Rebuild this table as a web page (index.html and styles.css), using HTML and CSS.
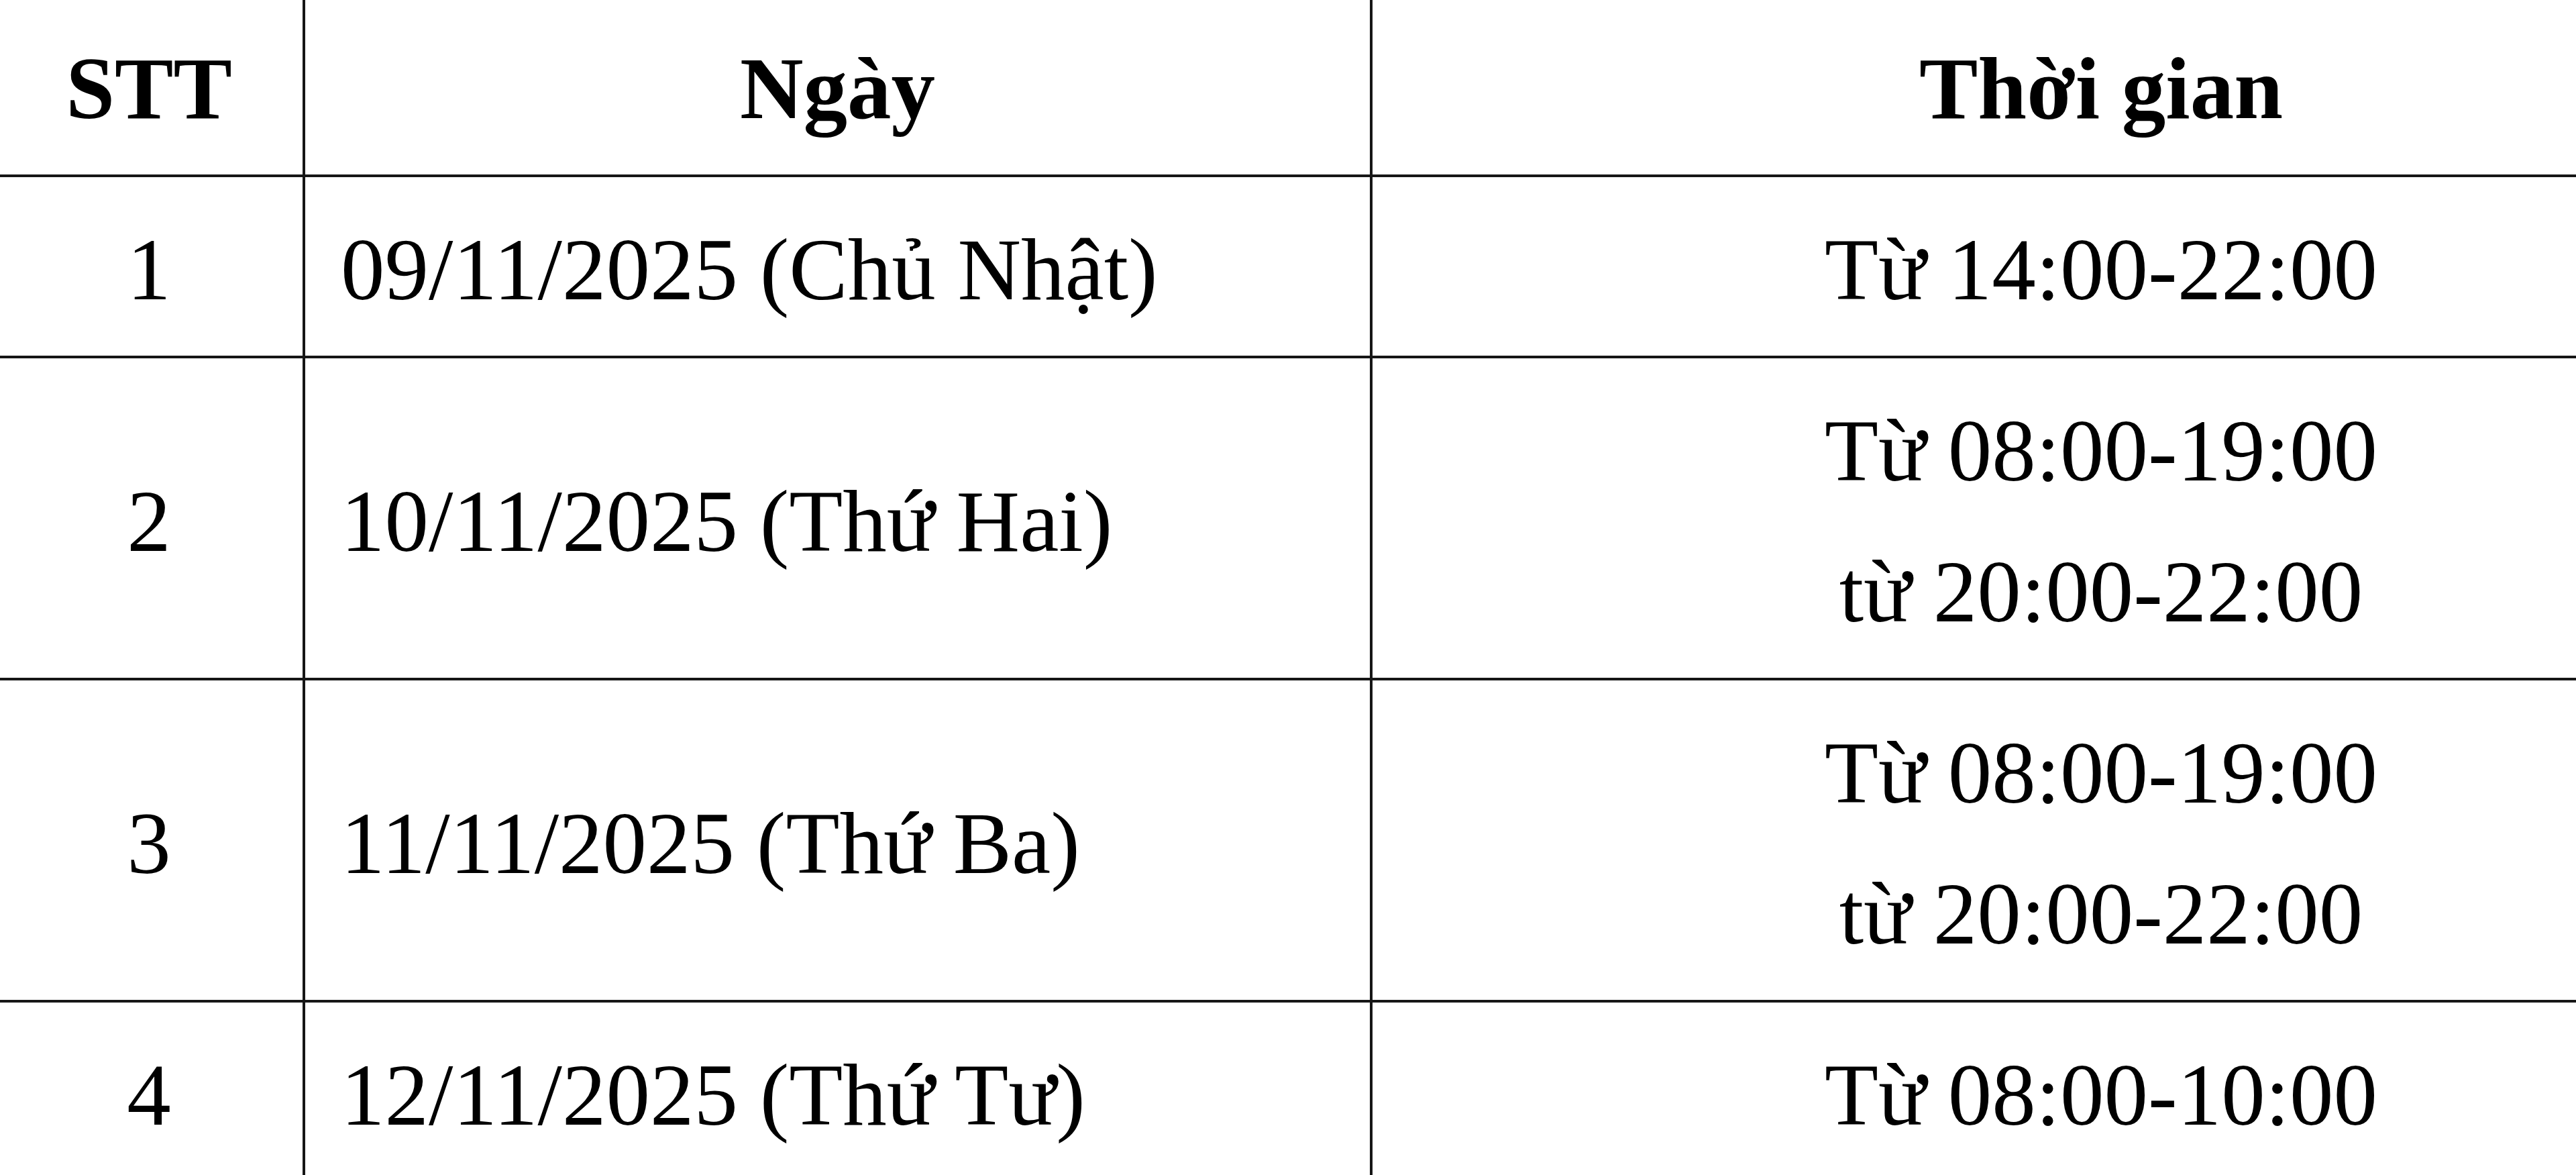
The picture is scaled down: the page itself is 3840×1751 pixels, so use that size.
FILE: index.html
```html
<!DOCTYPE html>
<html lang="vi">
<head>
<meta charset="utf-8">
<title>Lịch</title>
<link rel="stylesheet" href="styles.css">
</head>
<body>
<table class="schedule">
  <colgroup>
    <col class="c-stt">
    <col class="c-day">
    <col class="c-time">
  </colgroup>
  <thead>
    <tr>
      <th>STT</th>
      <th>Ngày</th>
      <th>Thời gian</th>
    </tr>
  </thead>
  <tbody>
    <tr>
      <td class="num">1</td>
      <td class="day">09/11/2025 (Chủ Nhật)</td>
      <td class="time">Từ 14:00-22:00</td>
    </tr>
    <tr>
      <td class="num">2</td>
      <td class="day">10/11/2025 (Thứ Hai)</td>
      <td class="time">Từ 08:00-19:00<br>từ 20:00-22:00</td>
    </tr>
    <tr>
      <td class="num">3</td>
      <td class="day">11/11/2025 (Thứ Ba)</td>
      <td class="time">Từ 08:00-19:00<br>từ 20:00-22:00</td>
    </tr>
    <tr>
      <td class="num">4</td>
      <td class="day">12/11/2025 (Thứ Tư)</td>
      <td class="time">Từ 08:00-10:00</td>
    </tr>
  </tbody>
</table>
</body>
</html>
```
FILE: styles.css
```css
html, body {
  margin: 0;
  padding: 0;
  background: #ffffff;
  overflow: hidden;
}

.schedule {
  margin-left: -11px;
  border-collapse: collapse;
  table-layout: fixed;
  width: 4229px;
  font-family: "Liberation Serif", "Times New Roman", serif;
  font-size: 131px;
  line-height: 210px;
  color: #000;
}

.c-stt { width: 462px; }
.c-day { width: 1591px; }
.c-time { width: 2176px; }

.schedule th,
.schedule td {
  border: 4px solid #161616;
  vertical-align: middle;
  white-space: nowrap;
}

.schedule th {
  border-top: none;
  font-weight: bold;
  text-align: center;
  padding: 27px 0 23px;
}

.schedule td {
  padding: 33px 0 23px;
}

.schedule td.num,
.schedule td.time {
  text-align: center;
}

.schedule td.day {
  text-align: left;
  padding-left: 53px;
}
```
